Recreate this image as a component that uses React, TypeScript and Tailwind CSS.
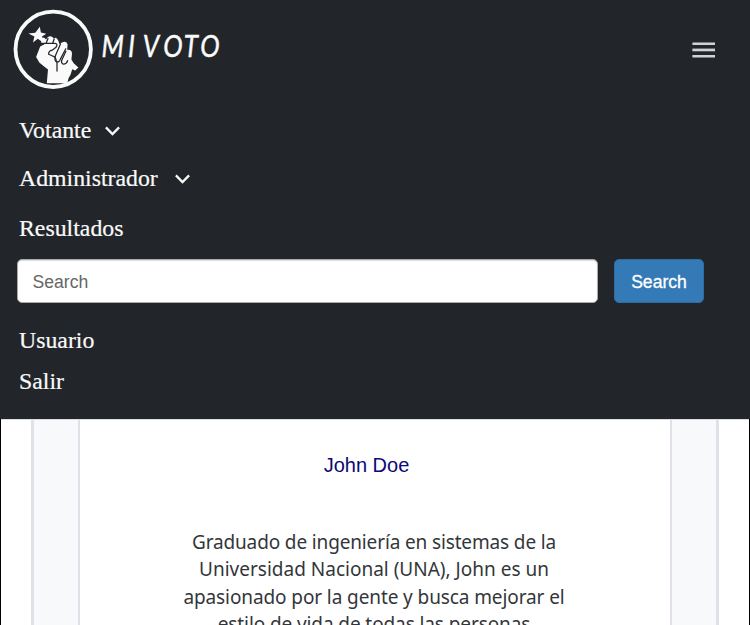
import React from 'react';

const Chevron = () => (
  <svg width="16" height="12" viewBox="0 0 16 12" fill="none" stroke="#f8f8f8" strokeWidth="2.3" className="shrink-0">
    <path d="M0.9 3.4 7.5 10 14.1 3.4" />
  </svg>
);

const MenuIcon = () => (
  <svg width="24" height="18" viewBox="0 0 24 18" fill="#d2d2d2">
    <rect x="0.4" y="1.5" width="22.6" height="2.5" />
    <rect x="0.4" y="7.6" width="22.6" height="2.7" />
    <rect x="0.4" y="14" width="22.6" height="2.5" />
  </svg>
);

const Logo = () => (
  <svg width="80" height="80" viewBox="13 9 80 80" className="shrink-0">
    <circle cx="53.2" cy="49.3" r="37.7" fill="none" stroke="#fafafa" strokeWidth="3.8" />
    <path fill="#fafafa" d="M39.8 26.8 40.9 32.6 46.2 33.8 42 36.5 43.1 42.5 37.8 38.8 33 42.4 34.4 36.6 28.4 33.4 35.3 32.7Z" />
    <path fill="#fafafa" d="M41.2 38Q44 36.6 46 39.4L47.4 37.4Q51 34.7 53.6 38.3 56.6 36.6 58.2 40.4L59.6 44.2 62 42.6Q66 40.5 67.6 44.3L67.2 49.7Q71.8 49.2 72 53.4L71.4 59.4 73.7 63.3 78.4 67.5 75.2 70.6 72.2 69.2 70.6 74.6Q68 78 67.2 83.2H46.8L48 69.4Q44 66.6 39.5 62.8L36.1 56.9 40.2 46.6 45.4 43.7 41.2 43Z" />
    <g fill="none" stroke="#22262a" strokeWidth="1.25" strokeLinecap="round" strokeLinejoin="round">
      <path d="M41.2 43.3H54.8Q58.4 43.5 56 47.3L52.2 50.2Q48.7 50.8 48.6 54.2L52.1 55.8Q55.5 56.2 56.3 60.7L57 62.5V71" />
      <path d="M60.5 44 55.8 54.8Q53.8 60.1 56.2 61.7 59.2 62.9 60.4 59.1L65.8 48.8" />
      <path d="M65.9 51.3 61.6 60.4Q61.1 63.7 63.5 64.1 66.4 64.2 67.6 60.7" />
      <path d="M48 38.5 46.3 42.7M54.2 38.8 52.8 43" />
    </g>
  </svg>
);

const nav = "font-['Liberation_Serif',serif] text-[23.8px] leading-[28px] text-[#fafafa] [-webkit-text-stroke:0.2px_#fafafa]";

export default function App() {
  return (
    <div className="h-[625px] w-[750px] overflow-hidden bg-black font-['Liberation_Sans',sans-serif]">
      <header className="h-[419px] bg-[#22262a]">
        <div className="flex h-[98px] items-center justify-between pr-[34px] pl-[13px]">
          <div className="flex items-center">
            <Logo />
            <svg width="140" height="50" viewBox="93 24 140 50">
              <g transform="translate(101.5 57) scale(.84 1)" fill="#fafafa" stroke="#fafafa" strokeWidth="0.45" className="font-['Lato',sans-serif] text-[31px] italic">
                <text x="0 31.5">MI</text>
                <text x="49 73.5 98 117.5">VOTO</text>
              </g>
            </svg>
          </div>
          <button aria-label="Menu" className="pt-[2px]"><MenuIcon /></button>
        </div>
        <nav className="flex flex-col pl-[19px] pt-[18px]">
          <a className={`${nav} flex items-center gap-[14px]`}>Votante <Chevron /></a>
          <a className={`${nav} mt-[20px] flex items-center gap-[17px]`}>Administrador <Chevron /></a>
          <a className={`${nav} mt-[22px]`}>Resultados</a>
        </nav>
        <form className="mt-[17px] flex gap-[16px] pl-[17px]">
          <input placeholder="Search" className="h-[44px] w-[581px] rounded-[5px] border border-[#aaa] bg-white px-[14.5px] pt-[2px] text-[17.6px] shadow-[inset_0_1px_1px_#ddd] placeholder:text-[#666]" />
          <button type="button" className="h-[44px] w-[90px] rounded-[5px] border border-[#2e6da4] bg-[#337ab7] pt-[2px] text-[17.6px] text-white [-webkit-text-stroke:0.3px_white]">Search</button>
        </form>
        <div className="flex flex-col gap-[13px] pt-[23px] pl-[19px]">
          <a className={nav}>Usuario</a>
          <a className={nav}>Salir</a>
        </div>
      </header>
      <main className="mx-px h-[206px] border-t border-[#dcdde1] bg-white px-[30px]">
        <section className="h-full border-x-3 border-[#e0e2e9] bg-[#f8f9fb] px-[44px]">
          <article className="h-full border-x-2 border-[#dfe1e8] bg-white pt-[33px] text-center">
            <h2 className="mr-[17px] text-[20px] leading-[24px] text-[#0d0877]">John Doe</h2>
            <p className="mt-[52px] mr-[2px] font-['Noto_Sans',sans-serif] text-[19px] leading-[27.4px] whitespace-nowrap text-[#33363a]">
              <span className="tracking-[-0.14px]">Graduado de ingeniería en sistemas de la</span><br />
              Universidad Nacional (UNA), John es un<br />
              <span className="tracking-[-0.1px]">apasionado por la gente y busca mejorar el</span><br />
              <span className="tracking-[-0.1px]">estilo de vida de todas las personas</span>
            </p>
          </article>
        </section>
      </main>
    </div>
  );
}
